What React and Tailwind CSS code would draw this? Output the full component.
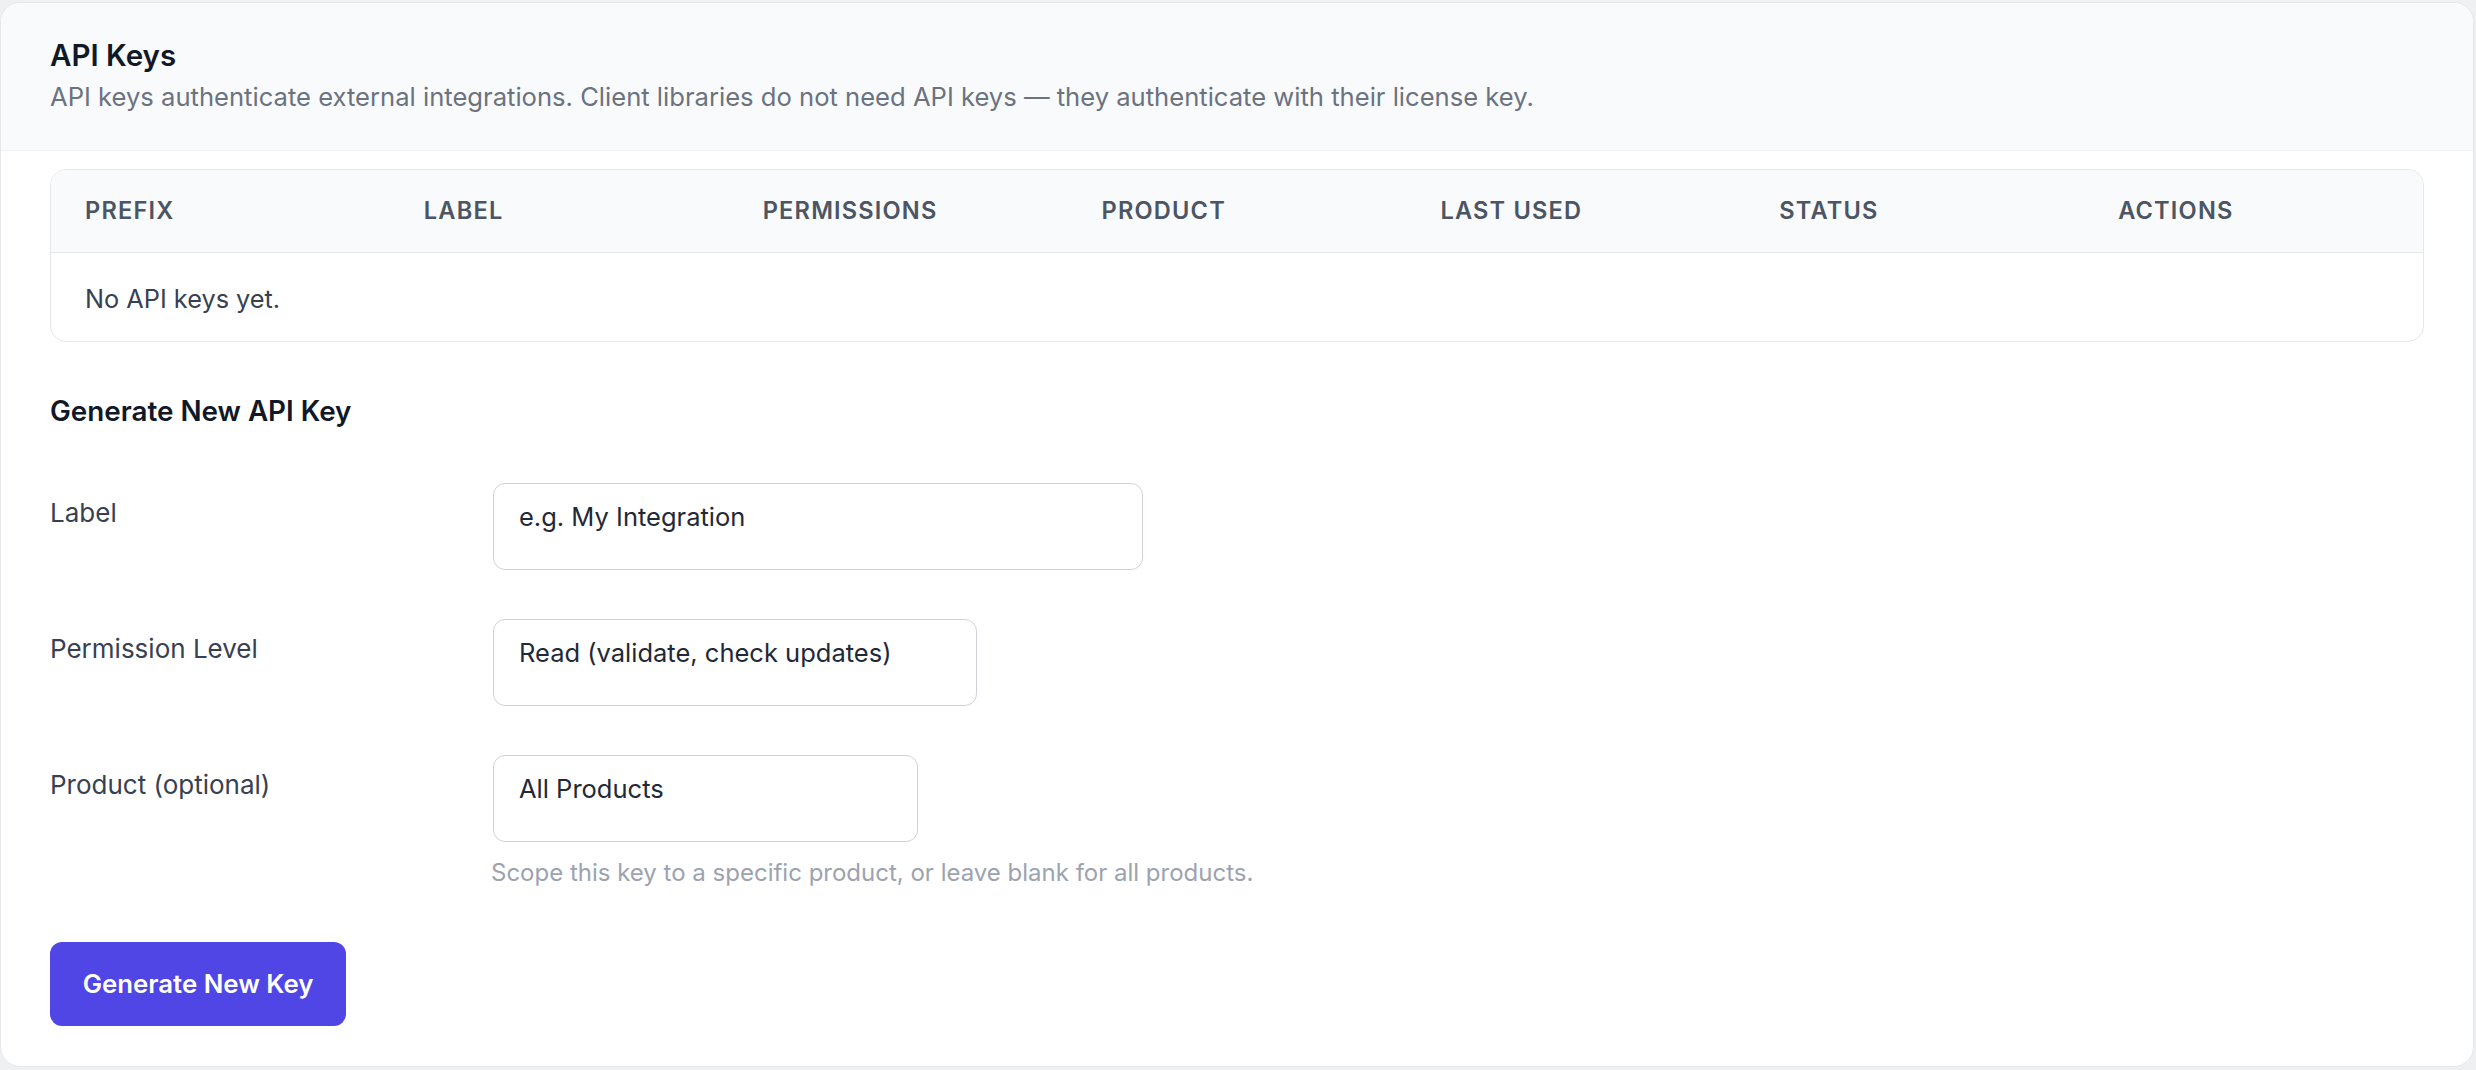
export default function App() {
  const cols = ["Prefix", "Label", "Permissions", "Product", "Last Used", "Status", "Actions"];
  return (
    <div className="min-h-screen bg-[#eef0f2] pt-[2px] pr-[2px] pl-0 pb-[3px]" style={{ fontFamily: "Inter, 'Noto Sans', sans-serif" }}>
      <div className="bg-white border border-[#e5e7eb] rounded-[20px] overflow-hidden h-[1065px] flex flex-col">
        <div className="bg-[#f9fafb] border-b border-[#f0f1f3] h-[148px] px-[49px] pt-[32px]">
          <h1 className="text-[29.5px] leading-[40px] font-semibold text-[#111827]">API Keys</h1>
          <p className="text-[25.6px] leading-[38px] text-[#6b7280] mt-[3px]">
            API keys authenticate external integrations. Client libraries do not need API keys — they authenticate with their license key.
          </p>
        </div>
        <div className="px-[49px] pt-[18px]">
          <div className="border border-[#e5e7eb] rounded-[16px] overflow-hidden">
            <div className="grid grid-cols-7 bg-[#f9fafb] border-b border-[#e5e7eb] h-[83px] items-center">
              {cols.map((c) => (
                <div key={c} className="px-[34px] text-[23.6px] font-semibold uppercase tracking-[0.05em] text-[#4b5563]">
                  {c}
                </div>
              ))}
            </div>
            <div className="h-[88px] flex items-center pt-[3px] px-[34px] text-[25.3px] text-[#374151]">No API keys yet.</div>
          </div>

          <h2 className="mt-[51px] text-[27.8px] leading-[36px] font-semibold text-[#111827]">Generate New API Key</h2>

          <div className="mt-[54px] flex flex-col gap-[49px]">
            <div className="flex">
              <label className="w-[443px] pt-[11px] text-[26px] leading-[38px] text-[#374151]">Label</label>
              <div className="w-[650px] h-[87px] border border-[#cfd3d9] rounded-[12px] px-[25px] pt-[14px] text-[25.5px] leading-[38px] text-[#1f2937]">
                e.g. My Integration
              </div>
            </div>
            <div className="flex">
              <label className="w-[443px] pt-[11px] text-[26px] leading-[38px] text-[#374151]">Permission Level</label>
              <div className="w-[484px] h-[87px] border border-[#cfd3d9] rounded-[12px] px-[25px] pt-[14px] text-[25.5px] leading-[38px] text-[#1f2937]">
                Read (validate, check updates)
              </div>
            </div>
            <div className="flex">
              <label className="w-[443px] pt-[11px] text-[26px] leading-[38px] text-[#374151]">Product (optional)</label>
              <div>
                <div className="w-[425px] h-[87px] border border-[#cfd3d9] rounded-[12px] px-[25px] pt-[14px] text-[25.5px] leading-[38px] text-[#1f2937]">
                  All Products
                </div>
                <p className="mt-[15px] -ml-[2px] text-[24px] leading-[32px] text-[#9ca3af]">
                  Scope this key to a specific product, or leave blank for all products.
                </p>
              </div>
            </div>
          </div>

          <button className="mt-[53px] w-[296px] h-[84px] rounded-[12px] bg-[#4f46e5] text-white text-[25.8px] font-semibold">
            Generate New Key
          </button>
        </div>
      </div>
    </div>
  );
}
